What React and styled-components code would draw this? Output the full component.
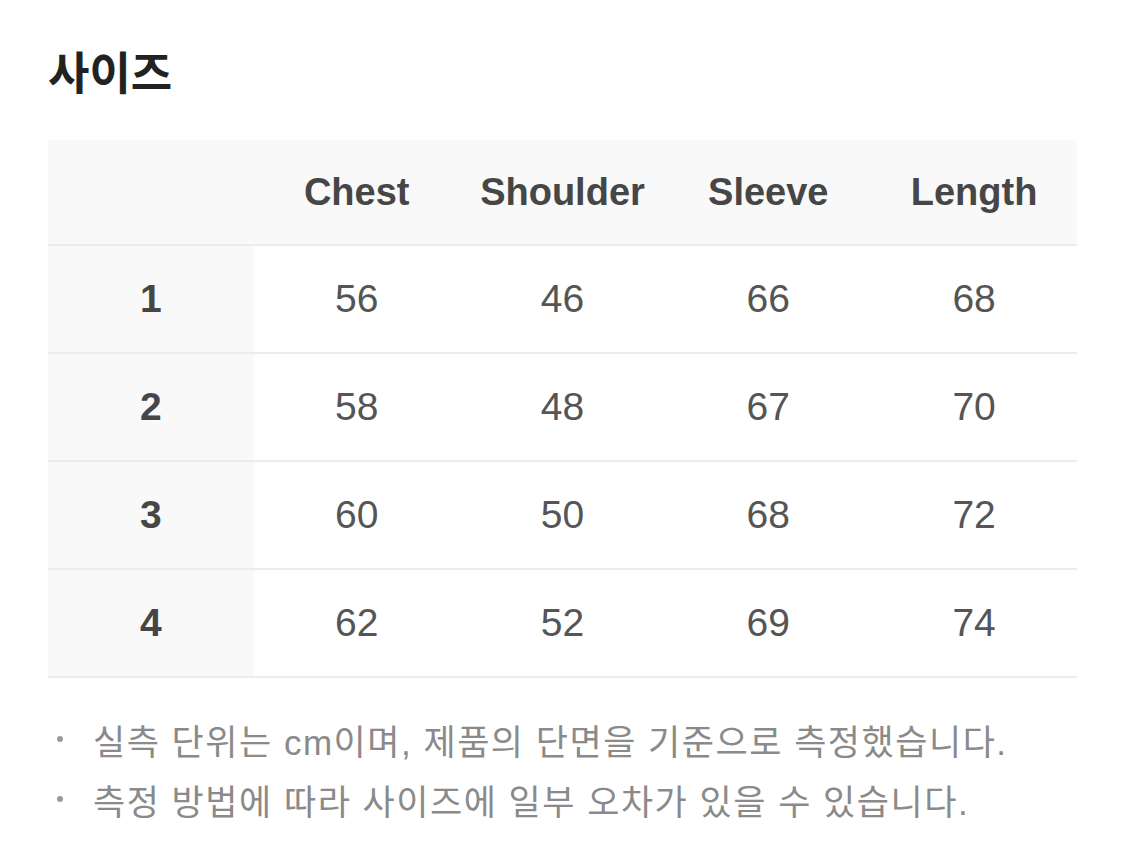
import React from "react";
import styled, { createGlobalStyle } from "styled-components";

const GlobalStyle = createGlobalStyle`
  html, body {
    margin: 0;
    padding: 0;
    background: #fff;
  }
  body {
    font-family: "Liberation Sans", "Noto Sans CJK KR", sans-serif;
    -webkit-font-smoothing: antialiased;
  }
`;

const columns = ["Chest", "Shoulder", "Sleeve", "Length"];

const rows = [
  { size: "1", values: [56, 46, 66, 68] },
  { size: "2", values: [58, 48, 67, 70] },
  { size: "3", values: [60, 50, 68, 72] },
  { size: "4", values: [62, 52, 69, 74] },
];

const notes = [
  "실측 단위는 cm이며, 제품의 단면을 기준으로 측정했습니다.",
  "측정 방법에 따라 사이즈에 일부 오차가 있을 수 있습니다.",
];

export default function App() {
  return (
    <Page>
      <GlobalStyle />
      <Title>사이즈</Title>
      <Table>
        <Row header>
          <Cell header label />
          {columns.map((c) => (
            <Cell header key={c}>
              {c}
            </Cell>
          ))}
        </Row>
        {rows.map((r) => (
          <Row key={r.size}>
            <Cell label>{r.size}</Cell>
            {r.values.map((v, i) => (
              <Cell key={i}>{v}</Cell>
            ))}
          </Row>
        ))}
      </Table>
      <Notes>
        {notes.map((n) => (
          <Note key={n}>
            <Bullet />
            {n}
          </Note>
        ))}
      </Notes>
    </Page>
  );
}

const Page = styled.div`
  padding: 44px 48px 0 48px;
`;

const Title = styled.h1`
  margin: 0 0 42px 0;
  font-family: "Noto Sans CJK KR", sans-serif;
  font-size: 45px;
  font-weight: 700;
  line-height: 54px;
  color: #222;
`;

const Table = styled.div`
  display: flex;
  flex-direction: column;
  width: 1029px;
`;

const Row = styled.div`
  display: grid;
  grid-template-columns: repeat(5, 1fr);
  height: ${(p) => (p.header ? "104px" : "106px")};
  border-bottom: 2px solid #ececec;
  background: ${(p) => (p.header ? "#f9f9f9" : "#fff")};
`;

const Cell = styled.div`
  display: flex;
  align-items: center;
  justify-content: center;
  font-family: "Liberation Sans", "Noto Sans CJK KR", sans-serif;
  font-size: ${(p) => (p.header ? "38px" : "39px")};
  font-weight: ${(p) => (p.header || p.label ? 700 : 400)};
  color: ${(p) => (p.header || p.label ? "#464646" : "#555")};
  background: ${(p) => (p.label ? "#f9f9f9" : "transparent")};
`;

const Notes = styled.ul`
  list-style: none;
  margin: 31px 0 0 0;
  padding: 0;
  display: flex;
  flex-direction: column;
`;

const Note = styled.li`
  display: flex;
  align-items: center;
  height: 60px;
  font-family: "Liberation Sans", "Noto Sans CJK KR", sans-serif;
  font-size: 35px;
  letter-spacing: 1.5px;
  color: #8a8a8a;
`;

const Bullet = styled.span`
  flex: none;
  width: 45px;
  height: 6px;
  display: flex;
  align-items: center;
  &::before {
    content: "";
    display: block;
    width: 6px;
    height: 6px;
    margin-left: 9px;
    border-radius: 50%;
    background: #9a9a9a;
  }
`;
